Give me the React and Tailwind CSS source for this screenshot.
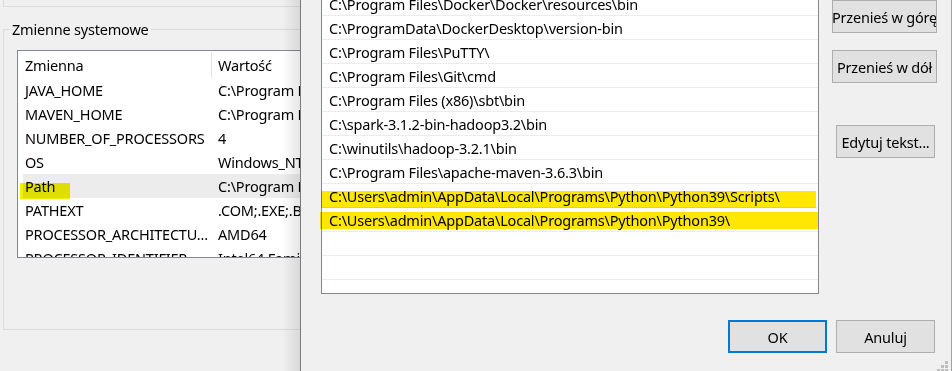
import React from "react";

const leftRows = [
  ["JAVA_HOME", "C:\\Program Files\\Java\\jdk-11.0.12"],
  ["MAVEN_HOME", "C:\\Program Files\\apache-maven-3.6.3"],
  ["NUMBER_OF_PROCESSORS", "4"],
  ["OS", "Windows_NT"],
  ["Path", "C:\\Program Files\\Common Files\\Oracle\\Java"],
  ["PATHEXT", ".COM;.EXE;.BAT;.CMD;.VBS;.VBE;.JS"],
  ["PROCESSOR_ARCHITECTU...", "AMD64"],
  ["PROCESSOR_IDENTIFIER", "Intel64 Family 6 Model 142 Stepping 10"],
];

const pathRows = [
  "C:\\Program Files\\Docker\\Docker\\resources\\bin",
  "C:\\ProgramData\\DockerDesktop\\version-bin",
  "C:\\Program Files\\PuTTY\\",
  "C:\\Program Files\\Git\\cmd",
  "C:\\Program Files (x86)\\sbt\\bin",
  "C:\\spark-3.1.2-bin-hadoop3.2\\bin",
  "C:\\winutils\\hadoop-3.2.1\\bin",
  "C:\\Program Files\\apache-maven-3.6.3\\bin",
  "C:\\Users\\admin\\AppData\\Local\\Programs\\Python\\Python39\\Scripts\\",
  "C:\\Users\\admin\\AppData\\Local\\Programs\\Python\\Python39\\",
  "",
  "",
  "",
];

function WinButton({ children, className = "" }) {
  return (
    <div
      className={
        "h-[33px] bg-[#e1e1e1] flex items-center justify-center overflow-hidden whitespace-nowrap leading-[20px] " +
        className
      }
    >
      <span className="shrink-0">{children}</span>
    </div>
  );
}

export default function App() {
  return (
    <div className="w-[952px] h-[371px] bg-[#f0f0f0] flex overflow-hidden relative font-['Noto_Sans',sans-serif] text-[14.5px] tracking-[-0.2px] text-black">
      {/* background window */}
      <div className="w-[300px] h-full relative overflow-hidden shrink-0">
        <div className="ml-[3px] h-[7px] border-l border-b border-[#dcdcdc]" />
        <div className="ml-[3px] mt-[22px] h-[301px] w-[400px] border-t border-l border-b border-[#dcdcdc] relative">
          <span className="absolute left-[6px] -top-[11px] px-[2px] bg-[#f0f0f0] leading-[20px] whitespace-nowrap">
            Zmienne systemowe
          </span>
          <div className="ml-[13px] mt-[20px] w-[420px] h-[208px] border border-[#828790] bg-white overflow-hidden">
            <div className="ml-[5px] h-[27px] flex items-center leading-[20px]">
              <div className="w-[189px] h-[26px] mt-[1px] border-r border-[#e5e5e5] pl-[2px] flex items-center">
                Zmienna
              </div>
              <div className="pl-[6px]">Wartość</div>
            </div>
            {leftRows.map(([name, value]) => (
              <div
                key={name}
                className={
                  "ml-[5px] h-[24px] flex items-center leading-[20px] whitespace-nowrap " +
                  (name === "Path" ? "bg-[#ececec]" : "")
                }
              >
                <div className="w-[189px] pl-[2px] overflow-hidden shrink-0">{name}</div>
                <div className="pl-[6px]">{value}</div>
              </div>
            ))}
          </div>
        </div>
        <div className="absolute right-0 top-0 h-full w-[18px] bg-gradient-to-r from-transparent to-black/10" />
      </div>

      {/* dialog */}
      <div className="flex-1 h-full border-l border-l-[#7a7a7a] border-r border-r-[#a0a0a0] flex flex-col">
        <div className="flex items-start">
          <div className="ml-[20px] -mt-[9px] w-[498px] h-[303px] border border-[#828790] bg-white overflow-hidden shrink-0">
            {pathRows.map((p, i) => (
              <div
                key={i}
                className="h-[24px] border-b border-[#ececec] flex items-center pl-[7px] leading-[20px] whitespace-nowrap"
              >
                {p}
              </div>
            ))}
          </div>
          <div className="ml-[13px] flex flex-col w-[105px]">
            <WinButton className="w-[105px] border border-[#adadad]">Przenieś w górę</WinButton>
            <WinButton className="w-[105px] mt-[17px] border border-[#adadad]">Przenieś w dół</WinButton>
            <WinButton className="w-[99px] ml-[4px] mt-[42px] border border-[#adadad]">Edytuj tekst...</WinButton>
          </div>
        </div>
        <div className="mt-[26px] flex justify-end gap-[9px] pr-[16px]">
          <WinButton className="w-[99px] border-2 border-[#0078d7]">OK</WinButton>
          <WinButton className="w-[99px] border border-[#adadad]">Anuluj</WinButton>
        </div>
      </div>

      {/* highlighter marks */}
      <div className="absolute left-[20px] top-[183px] w-[50px] h-[16px] bg-[#f2ef00] mix-blend-multiply" />
      <div className="absolute left-[321px] top-[191px] w-[495px] h-[17px] bg-[#ffe700] mix-blend-multiply" />
      <div className="absolute left-[320px] top-[212px] w-[498px] h-[17px] bg-[#ffe700] mix-blend-multiply" />

      {/* size grip */}
      <svg className="absolute right-[3px] bottom-0" width="12" height="11" viewBox="0 0 12 11">
        <rect x="8" y="1" width="3" height="3" fill="#bdbdbd" />
        <rect x="4" y="5" width="3" height="3" fill="#bdbdbd" />
        <rect x="8" y="5" width="3" height="3" fill="#bdbdbd" />
        <rect x="0" y="9" width="3" height="2" fill="#bdbdbd" />
        <rect x="4" y="9" width="3" height="2" fill="#bdbdbd" />
        <rect x="8" y="9" width="3" height="2" fill="#bdbdbd" />
      </svg>
    </div>
  );
}
